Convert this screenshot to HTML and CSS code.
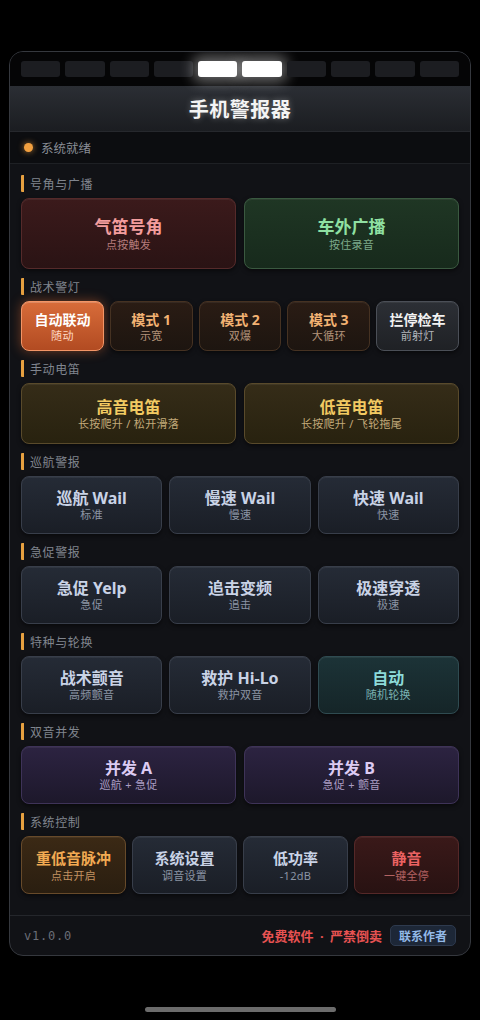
FILE: index.html
```html
<!DOCTYPE html>
<html lang="zh-CN">
<head>
    <meta charset="UTF-8">
    <meta name="viewport" content="width=device-width, initial-scale=1.0">
    <title>手机警报器</title>
    <link rel="stylesheet" href="styles.css">
</head>
<body>
    <div class="panel">
        <div class="lightbar">
            <span class="seg"></span>
            <span class="seg"></span>
            <span class="seg"></span>
            <span class="seg"></span>
            <span class="seg on"></span>
            <span class="seg on"></span>
            <span class="seg"></span>
            <span class="seg"></span>
            <span class="seg"></span>
            <span class="seg"></span>
        </div>

        <header class="title-bar">
            <h1>手机警报器</h1>
        </header>

        <div class="status">
            <span class="dot"></span>
            <span>系统就绪</span>
        </div>

        <main class="content">
            <section class="group">
                <h3 class="label">号角与广播</h3>
                <div class="row cols-2 tall">
                    <button class="btn red"><b>气笛号角</b><small>点按触发</small></button>
                    <button class="btn green"><b>车外广播</b><small>按住录音</small></button>
                </div>
            </section>

            <section class="group">
                <h3 class="label">战术警灯</h3>
                <div class="row cols-5 short">
                    <button class="btn active"><b>自动联动</b><small>随动</small></button>
                    <button class="btn brown"><b>模式 1</b><small>示宽</small></button>
                    <button class="btn brown"><b>模式 2</b><small>双爆</small></button>
                    <button class="btn brown"><b>模式 3</b><small>大循环</small></button>
                    <button class="btn grey"><b>拦停检车</b><small>前射灯</small></button>
                </div>
            </section>

            <section class="group">
                <h3 class="label">手动电笛</h3>
                <div class="row cols-2 mid">
                    <button class="btn amber"><b>高音电笛</b><small>长按爬升 / 松开滑落</small></button>
                    <button class="btn amber"><b>低音电笛</b><small>长按爬升 / 飞轮拖尾</small></button>
                </div>
            </section>

            <section class="group">
                <h3 class="label">巡航警报</h3>
                <div class="row cols-3">
                    <button class="btn slate"><b>巡航 Wail</b><small>标准</small></button>
                    <button class="btn slate"><b>慢速 Wail</b><small>慢速</small></button>
                    <button class="btn slate"><b>快速 Wail</b><small>快速</small></button>
                </div>
            </section>

            <section class="group">
                <h3 class="label">急促警报</h3>
                <div class="row cols-3">
                    <button class="btn slate"><b>急促 Yelp</b><small>急促</small></button>
                    <button class="btn slate"><b>追击变频</b><small>追击</small></button>
                    <button class="btn slate"><b>极速穿透</b><small>极速</small></button>
                </div>
            </section>

            <section class="group">
                <h3 class="label">特种与轮换</h3>
                <div class="row cols-3">
                    <button class="btn slate"><b>战术颤音</b><small>高频颤音</small></button>
                    <button class="btn slate"><b>救护 Hi-Lo</b><small>救护双音</small></button>
                    <button class="btn teal"><b>自动</b><small>随机轮换</small></button>
                </div>
            </section>

            <section class="group">
                <h3 class="label">双音并发</h3>
                <div class="row cols-2">
                    <button class="btn purple"><b>并发 A</b><small>巡航 + 急促</small></button>
                    <button class="btn purple"><b>并发 B</b><small>急促 + 颤音</small></button>
                </div>
            </section>

            <section class="group">
                <h3 class="label">系统控制</h3>
                <div class="row cols-4">
                    <button class="btn bass"><b>重低音脉冲</b><small>点击开启</small></button>
                    <button class="btn slate"><b>系统设置</b><small>调音设置</small></button>
                    <button class="btn slate"><b>低功率</b><small>-12dB</small></button>
                    <button class="btn mute"><b>静音</b><small>一键全停</small></button>
                </div>
            </section>
        </main>

        <footer class="footer">
            <span class="version">v1.0.0</span>
            <span class="notice">免费软件 <i class="sep">·</i> 严禁倒卖</span>
            <button class="contact">联系作者</button>
        </footer>
    </div>

    <div class="home-bar"></div>
</body>
</html>
```

FILE: styles.css
```css
body {
    margin: 0;
    padding: 51px 9px 0;
    background-color: #000;
    font-family: "Noto Sans", "Noto Sans CJK SC", sans-serif;
    color: #e8e8e8;
}

.panel {
    background-color: #111216;
    border: 1px solid #35383e;
    border-radius: 14px;
    overflow: hidden;
    box-shadow: 0 6px 24px rgba(0, 0, 0, 0.8);
}

/* light bar */
.lightbar {
    display: flex;
    gap: 5px;
    padding: 9px 11px;
    background-color: #050506;
}

.seg {
    flex: 1;
    height: 16px;
    border-radius: 3px;
    background-color: #1c1d21;
}

.seg.on {
    background-color: #fff;
    box-shadow: 0 0 14px 5px rgba(255, 255, 255, 0.4);
}

.title-bar {
    height: 46px;
    display: flex;
    align-items: center;
    justify-content: center;
    background: linear-gradient(#2b2e34, #1b1d21);
    border-bottom: 1px solid #26282d;
    box-sizing: border-box;
}

.title-bar h1 {
    margin: 0;
    font-size: 20px;
    font-weight: 700;
    letter-spacing: 0.5px;
    color: #f4f4f4;
    text-shadow: 0 0 6px rgba(255, 255, 255, 0.35);
}

.status {
    height: 32px;
    display: flex;
    align-items: center;
    gap: 8px;
    padding-left: 14px;
    background-color: #0c0d10;
    border-bottom: 1px solid #1e2024;
    box-sizing: border-box;
    font-size: 12.5px;
    color: #8a8e96;
}

.dot {
    width: 9px;
    height: 9px;
    border-radius: 50%;
    background-color: #f2a040;
    box-shadow: 0 0 6px rgba(242, 160, 64, 0.7);
}

.content {
    padding: 11px 11px 21px;
    display: flex;
    flex-direction: column;
    gap: 9px;
}

.label {
    margin: 0 0 6px;
    height: 17px;
    display: flex;
    align-items: center;
    border-left: 3px solid #e6a040;
    border-radius: 1px;
    padding-left: 6px;
    font-size: 12px;
    font-weight: 400;
    letter-spacing: 0.6px;
    color: #80858e;
}

.row {
    display: grid;
    gap: 7px;
}

.cols-2 { grid-template-columns: repeat(2, 1fr); gap: 8px; }
.cols-3 { grid-template-columns: repeat(3, 1fr); }
.cols-4 { grid-template-columns: repeat(4, 1fr); gap: 6px; }
.cols-5 { grid-template-columns: repeat(5, 1fr); gap: 6px; }

.btn {
    height: 58px;
    display: flex;
    flex-direction: column;
    align-items: center;
    justify-content: center;
    padding: 0;
    border-radius: 8px;
    border: 1px solid #383e4a;
    background: linear-gradient(#252b36, #1a1e26);
    box-shadow: inset 0 1px 0 rgba(255, 255, 255, 0.06), 0 2px 4px rgba(0, 0, 0, 0.5);
    font-family: inherit;
    color: #c9d3e6;
    cursor: pointer;
}

.btn b {
    font-size: 16px;
    line-height: 20px;
    font-weight: 700;
}

.btn small {
    font-size: 11px;
    line-height: 14px;
    letter-spacing: 0.3px;
    color: #8b94a4;
}

.tall .btn { height: 71px; }
.tall .btn b { font-size: 17px; line-height: 22px; }

.short .btn { height: 50px; }
.short .btn b { font-size: 14px; line-height: 18px; }
.short .btn small { line-height: 13px; }

.mid .btn { height: 61px; }

.cols-4 .btn b { font-size: 15px; }
.cols-4 .btn small { line-height: 15px; }

.red {
    background: linear-gradient(#3b1a1b, #2a1314);
    border-color: #552a2a;
    color: #f39d9d;
}
.red small { color: #b67c7c; }

.green {
    background: linear-gradient(#1f3624, #172a1c);
    border-color: #3a5940;
    color: #8fe0a2;
}
.green small { color: #7ca98a; }

.active {
    background: linear-gradient(#d86c3a, #b24b22);
    border-color: #f39566;
    color: #fff;
    box-shadow: 0 0 12px rgba(230, 110, 50, 0.45), inset 0 1px 0 rgba(255, 255, 255, 0.2);
}
.active small { color: #ffd9c4; }

.brown {
    background: linear-gradient(#2a1c14, #1d1510);
    border-color: #463222;
    color: #f2b273;
}
.brown small { color: #b3937a; }

.grey {
    background: linear-gradient(#2c2f35, #1f2125);
    border-color: #4b4f57;
    color: #f2f2f2;
}
.grey small { color: #b2b5bb; }

.amber {
    background: linear-gradient(#352c18, #28220f);
    border-color: #594a2b;
    color: #f2ca62;
}
.amber small { color: #c3aa7a; }

.slate small { color: #8b94a4; }

.teal {
    background: linear-gradient(#1c3337, #152528);
    border-color: #2f4b51;
    color: #8cdad8;
}
.teal small { color: #7ab2b1; }

.purple {
    background: linear-gradient(#2c2341, #1d182b);
    border-color: #3e3358;
    color: #dccbf2;
}
.purple small { color: #a99bc2; }

.bass {
    background: linear-gradient(#3b2915, #2a1e10);
    border-color: #674a2a;
    color: #f2aa52;
}
.bass small { color: #c29262; }

.mute {
    background: linear-gradient(#3a1919, #281212);
    border-color: #552828;
    color: #ea6262;
}
.mute small { color: #b26262; }

.footer {
    height: 39px;
    display: flex;
    align-items: center;
    padding: 0 14px;
    border-top: 1px solid #24262b;
}

.version {
    font-family: "DejaVu Sans Mono", monospace;
    font-size: 12px;
    letter-spacing: 0.8px;
    color: #6a6e76;
}

.notice {
    margin-left: auto;
    margin-right: 8px;
    font-size: 13px;
    font-weight: 700;
    color: #e85252;
}

.notice .sep {
    font-style: normal;
    margin: 0 3px;
}

.contact {
    height: 21px;
    padding: 0 8px;
    border-radius: 5px;
    border: 1px solid #2e3a4e;
    background-color: #1d2737;
    font-family: inherit;
    font-size: 12px;
    font-weight: 700;
    color: #93b9e8;
}

.home-bar {
    width: 191px;
    height: 5px;
    margin: 51px auto 0;
    border-radius: 3px;
    background-color: #6c6c6c;
}
```
